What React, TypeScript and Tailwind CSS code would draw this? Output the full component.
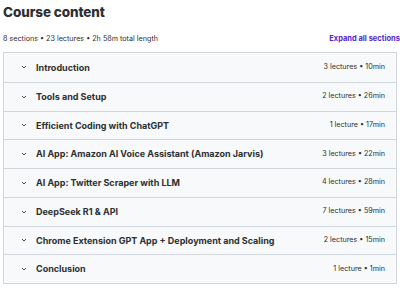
import React from 'react';

const sections = [
  { title: 'Introduction', meta: '3 lectures • 10min' },
  { title: 'Tools and Setup', meta: '2 lectures • 26min' },
  { title: 'Efficient Coding with ChatGPT', meta: '1 lecture • 17min' },
  { title: 'AI App: Amazon AI Voice Assistant (Amazon Jarvis)', meta: '3 lectures • 22min' },
  { title: 'AI App: Twitter Scraper with LLM', meta: '4 lectures • 28min' },
  { title: 'DeepSeek R1 & API', meta: '7 lectures • 59min' },
  { title: 'Chrome Extension GPT App + Deployment and Scaling', meta: '2 lectures • 15min' },
  { title: 'Conclusion', meta: '1 lecture • 1min' },
];

function Chevron() {
  return (
    <svg width="6" height="6" viewBox="0 0 24 24" fill="none" stroke="#2d2f31" strokeWidth="3.5" strokeLinecap="round" strokeLinejoin="round">
      <path d="M5 9l7 7 7-7" />
    </svg>
  );
}

export default function App() {
  return (
    <div className="w-[400px] h-[292px] overflow-hidden bg-white text-[#2d2f31]" style={{ fontFamily: 'Inter, "Liberation Sans", sans-serif' }}>
      {/* Header */}
      <h2 className="pl-[3px] pt-[2px] text-[13.5px] leading-[20px] font-extrabold tracking-[-0.1px]">Course content</h2>
      <div className="flex items-center justify-between pl-[3px] mt-[11px] h-[12px]">
        <span className="text-[7.2px] text-[#2d2f31]">8 sections • 23 lectures • 2h 58m total length</span>
        <span className="text-[7.5px] font-bold text-[#5624d0] whitespace-nowrap">Expand all sections</span>
      </div>

      {/* Section list */}
      <div className="ml-[3px] mr-[3px] mt-[7px] border border-[#d1d7dc]">
        {sections.map((s, i) => (
          <div
            key={s.title}
            className={`flex items-center h-[28.75px] bg-[#f7f9fa] pl-[17px] pr-[11px] ${i > 0 ? 'border-t border-[#d1d7dc]' : ''}`}
          >
            <Chevron />
            <span className="ml-[9px] text-[9px] font-bold whitespace-nowrap">{s.title}</span>
            <span className="ml-auto text-[7.2px] text-[#2d2f31] whitespace-nowrap">{s.meta}</span>
          </div>
        ))}
      </div>
    </div>
  );
}
